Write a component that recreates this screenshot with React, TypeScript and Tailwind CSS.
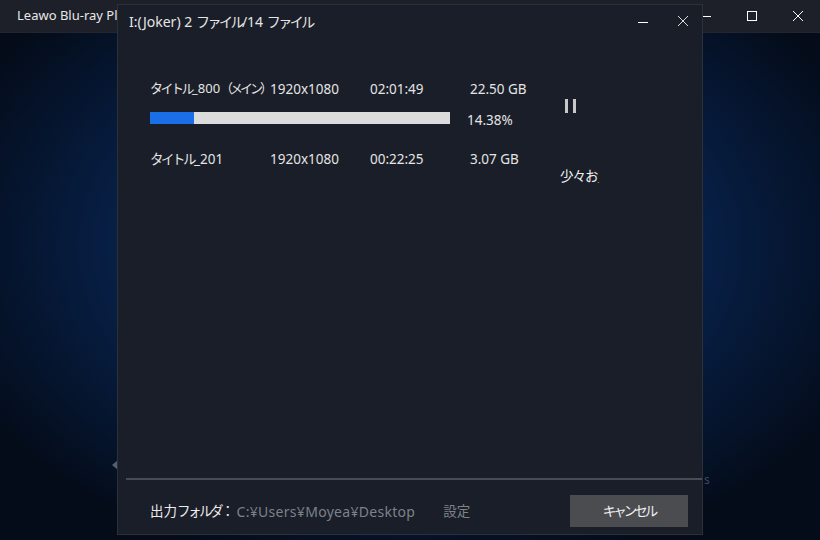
import React from "react";

const font = { fontFamily: '"Noto Sans", "Noto Sans CJK JP", sans-serif' };

export default function App() {
  return (
    <div
      className="relative w-[820px] h-[540px] overflow-hidden text-white"
      style={font}
    >
      {/* background app */}
      <div className="absolute inset-0 flex flex-col bg-[#050c1a]">
        <div className="h-[33px] bg-[#1d2029] flex items-center pl-[17px] pr-[16px] border-b border-[#23262e]">
          <span className="whitespace-nowrap text-[13px] text-[#e8e8e8]">Leawo Blu-ray Pl</span>
          <div className="ml-auto flex items-center gap-[34px]">
            <svg width="12" height="12" viewBox="0 0 12 12"><path d="M1 6.5h10" stroke="#fff" strokeWidth="1" /></svg>
            <svg width="12" height="12" viewBox="0 0 12 12"><rect x="1.5" y="1.5" width="9" height="9" fill="none" stroke="#fff" strokeWidth="1" /></svg>
            <svg width="12" height="12" viewBox="0 0 12 12"><path d="M1 1L11 11M11 1L1 11" stroke="#fff" strokeWidth="1" /></svg>
          </div>
        </div>
        <div className="flex-1 bg-[radial-gradient(ellipse_60%_65%_at_50%_42%,#0c3674_0%,#0a2a5c_40%,#061a3a_70%,#040c1a_100%)] relative">
          <svg className="absolute left-[110px] top-[425px]" width="10" height="14" viewBox="0 0 10 14"><path d="M8 2L2 7L8 12" fill="#56606e" /></svg>
          <span className="absolute left-[704px] top-[438px] text-[12px] text-[#3a4a60]">s</span>
        </div>
      </div>

      {/* dialog */}
      <div className="absolute left-[117px] top-[4px] w-[586px] h-[531px] bg-[#1a1e28] border border-[#2b3039] flex flex-col">
        <div className="h-[32px] flex items-center pl-[11px] pr-[13px]">
          <span className="text-[14px] text-[#e6e6e6] whitespace-nowrap">
            I:(Joker) 2 <span className="tracking-[-2.5px]">ファイル</span>/14 <span className="tracking-[-2.5px]">ファイル</span>
          </span>
          <div className="ml-auto flex items-center gap-[28px]">
            <svg width="12" height="12" viewBox="0 0 12 12"><path d="M1 7.5h10" stroke="#fff" strokeWidth="1" /></svg>
            <svg width="12" height="12" viewBox="0 0 12 12"><path d="M1 1L11 11M11 1L1 11" stroke="#ddd" strokeWidth="1" /></svg>
          </div>
        </div>

        <div className="flex-1 flex pl-[32px] pt-[40px]">
          <div className="flex flex-col w-[410px] text-[13.5px] text-[#e4e4e4]">
            <div className="grid grid-cols-[120px_100px_100px_auto] h-[24px] items-center">
              <span className="whitespace-nowrap text-[13px]">
                <span className="tracking-[-2.5px]">タイトル</span>_800<span className="tracking-[-3px]">（メイン）</span>
              </span>
              <span>1920x1080</span>
              <span>02:01:49</span>
              <span>22.50 GB</span>
            </div>
            <div className="flex items-center mt-[6px] h-[22px]">
              <div className="w-[300px] h-[12px] bg-[#dcdcdc] flex">
                <div className="w-[44px] h-full bg-[#1a6fe6]" />
              </div>
              <span className="ml-[17px] mt-[4px]">14.38%</span>
            </div>
            <div className="grid grid-cols-[120px_100px_100px_auto] h-[24px] items-center mt-[18px]">
              <span className="whitespace-nowrap">
                <span className="tracking-[-2.5px]">タイトル</span>_201
              </span>
              <span>1920x1080</span>
              <span>00:22:25</span>
              <span>3.07 GB</span>
            </div>
          </div>
          <div className="flex flex-col pt-[22px]">
            <div className="flex gap-[5px] ml-[5px]">
              <div className="w-[3px] h-[14px] bg-[#c8c8c8]" />
              <div className="w-[3px] h-[14px] bg-[#c8c8c8]" />
            </div>
            <span className="mt-[53px] text-[13.5px] text-[#f0f0f0] tracking-[-1px] whitespace-nowrap">少々お<span className="text-[6px] align-bottom">.</span></span>
          </div>
        </div>

        <div className="ml-[8px] h-[2px] bg-[#474c55]" />
        <div className="h-[54px] flex items-center pt-[8px] pl-[32px] pr-[14px]">
          <span className="text-[13.5px] text-[#ececec] whitespace-nowrap">
            出力<span className="tracking-[-2.5px]">フォルダ</span>：
          </span>
          <span className="ml-[2px] text-[14px] tracking-[0.3px] text-[#7d828a] whitespace-nowrap">C:¥Users¥Moyea¥Desktop</span>
          <span className="ml-[28px] text-[13.5px] text-[#7d828a]">設定</span>
          <button className="ml-auto w-[118px] h-[32px] bg-[#4b4c50] text-[13.5px] text-[#f0f0f0] tracking-[-3px]">キャンセル</button>
        </div>
      </div>
    </div>
  );
}
